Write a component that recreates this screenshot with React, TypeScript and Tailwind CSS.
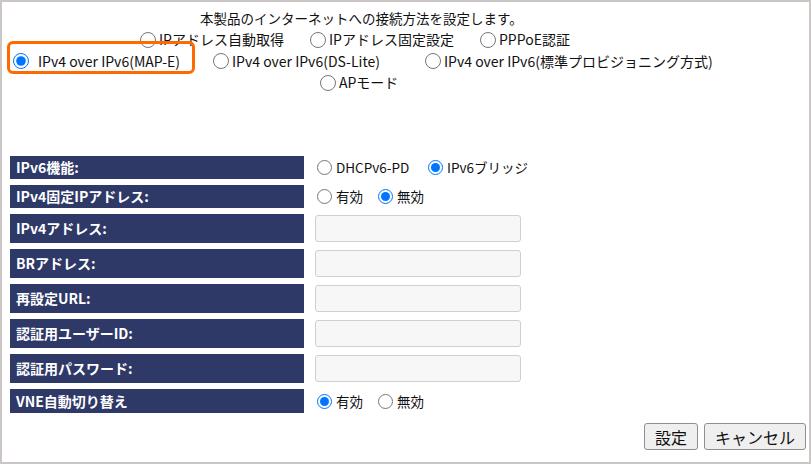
import type { ReactNode } from "react";

function Radio({ checked = false, name, size = "w-4 h-4" }: { checked?: boolean; name: string; size?: string }) {
  return <input type="radio" name={name} defaultChecked={checked} className={`m-0 shrink-0 ${size}`} />;
}

function TopOption({ label, name, checked, width, gap = "gap-[3px]" }: { label: string; name: string; checked?: boolean; width?: string; gap?: string }) {
  return (
    <label className={`flex items-center ${gap} ${width ?? ""}`}>
      <Radio name={name} checked={checked} />
      <span className="whitespace-nowrap">{label}</span>
    </label>
  );
}

function Row({ label, height, children }: { label: string; height: string; children?: ReactNode }) {
  return (
    <>
      <div className={`flex items-center bg-[#2e3968] pl-[6px] text-[14px] font-bold text-white ${height}`}>{label}</div>
      <div className={`flex items-center ${height}`}>{children}</div>
    </>
  );
}

function SmallOption({ label, name, checked, width }: { label: string; name: string; checked?: boolean; width?: string }) {
  return (
    <label className={`flex items-center gap-[4px] pl-[2px] ${width ?? ""}`}>
      <Radio name={name} checked={checked} size="w-[15px] h-[15px]" />
      <span className="whitespace-nowrap text-[13.5px]">{label}</span>
    </label>
  );
}

function TextBox() {
  return <div className="h-[27px] w-[206px] rounded-[3px] border border-[#cfcfcf] bg-[#f7f7f7]" />;
}

export default function App() {
  return (
    <div className="h-[465px] w-[811px] bg-white font-['Noto_Sans_CJK_JP',sans-serif] text-[#111]">
      <div className="flex h-[464px] w-[811px] flex-col border-2 border-[#cdc6c6]">
        <div className="flex flex-col pt-[6px] text-[14px]">
          <div className="flex h-[21px] items-center pl-[198px] text-[13.5px]">本製品のインターネットへの接続方法を設定します。</div>
          <div className="flex h-[21px] items-center pl-[138px]">
            <TopOption name="mode" label="IPアドレス自動取得" width="w-[170px]" />
            <TopOption name="mode" label="IPアドレス固定設定" width="w-[170px]" />
            <TopOption name="mode" label="PPPoE認証" />
          </div>
          <div className="flex h-[22px] items-center pl-[5px]">
            <div className="relative flex h-full w-[188px] items-center pl-[6px]">
              <span className="pointer-events-none absolute inset-x-0 -top-[9px] -bottom-[2px] rounded-[6px] border-[3px] border-[#ff6a00]" />
              <TopOption name="mode" label="IPv4 over IPv6(MAP-E)" checked gap="gap-[9px]" />
            </div>
            <div className="ml-[18px] w-[212px]">
              <TopOption name="mode" label="IPv4 over IPv6(DS-Lite)" />
            </div>
            <TopOption name="mode" label="IPv4 over IPv6(標準プロビジョニング方式)" />
          </div>
          <div className="flex h-[21px] items-center pl-[318px]">
            <TopOption name="mode" label="APモード" />
          </div>
        </div>

        <div className="mt-[63px] grid grid-cols-[294px_auto] gap-x-[11px] gap-y-[6px] pl-[8px]">
          <Row label="IPv6機能:" height="h-[23px]">
            <SmallOption name="v6" label="DHCPv6-PD" width="w-[111px]" />
            <SmallOption name="v6" label="IPv6ブリッジ" checked />
          </Row>
          <Row label="IPv4固定IPアドレス:" height="h-[23px]">
            <SmallOption name="fix" label="有効" width="w-[61px]" />
            <SmallOption name="fix" label="無効" checked />
          </Row>
          <Row label="IPv4アドレス:" height="h-[29px]">
            <TextBox />
          </Row>
          <Row label="BRアドレス:" height="h-[29px]">
            <TextBox />
          </Row>
          <Row label="再設定URL:" height="h-[29px]">
            <TextBox />
          </Row>
          <Row label="認証用ユーザーID:" height="h-[29px]">
            <TextBox />
          </Row>
          <Row label="認証用パスワード:" height="h-[29px]">
            <TextBox />
          </Row>
          <Row label="VNE自動切り替え" height="h-[24px]">
            <SmallOption name="vne" label="有効" checked width="w-[61px]" />
            <SmallOption name="vne" label="無効" />
          </Row>
        </div>

        <div className="mt-[10px] flex justify-end gap-[6px] pr-[3px]">
          <button type="button" className="h-[27px] w-[54px] rounded-[3px] border border-[#8f8f8f] bg-[#efefef] text-[16px] leading-none">設定</button>
          <button type="button" className="h-[27px] w-[102px] rounded-[3px] border border-[#8f8f8f] bg-[#efefef] text-[16px] leading-none">キャンセル</button>
        </div>
      </div>
    </div>
  );
}
